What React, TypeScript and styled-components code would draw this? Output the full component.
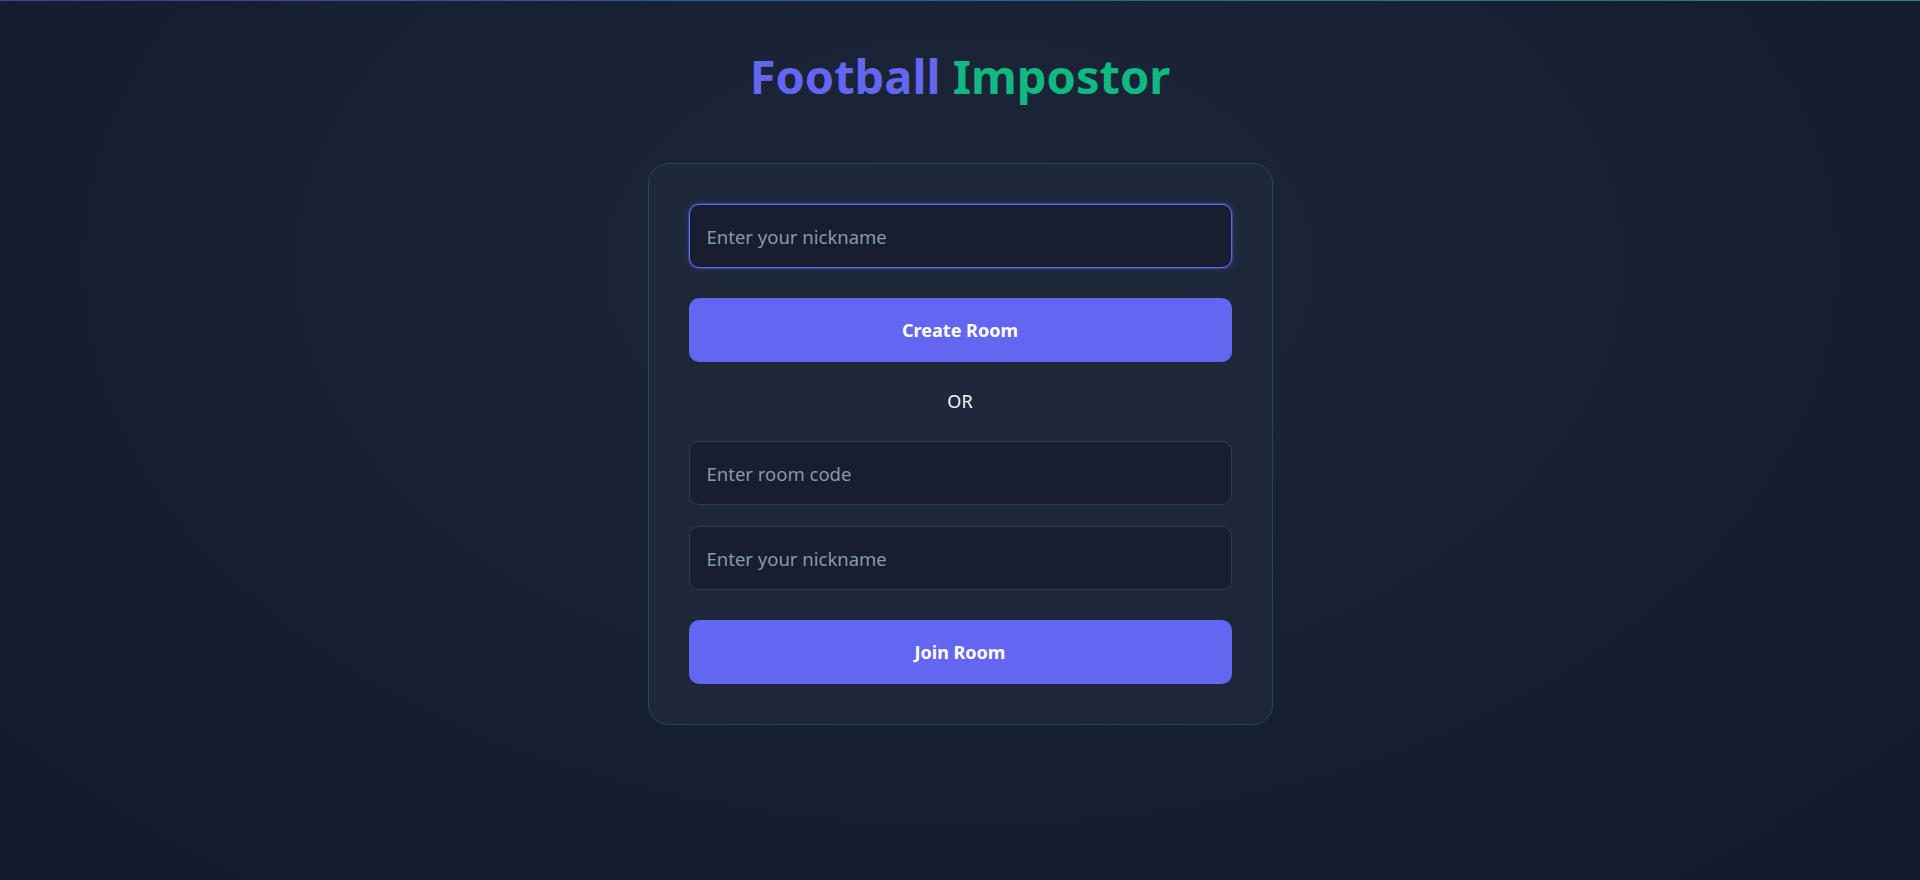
import React from "react";
import styled, { createGlobalStyle } from "styled-components";

const GlobalStyle = createGlobalStyle`
  * { box-sizing: border-box; }
  html, body { margin: 0; padding: 0; }
  body {
    font-family: "Noto Sans", "Open Sans", sans-serif;
    background: #121a2b;
    color: #f1f5f9;
  }
`;

const Page = styled.div`
  min-height: 880px;
  display: flex;
  flex-direction: column;
  align-items: center;
  background: radial-gradient(ellipse at 50% 30%, #1e2739 0%, #182134 45%, #111a2b 100%);
`;

const TopBar = styled.div`
  align-self: stretch;
  height: 1px;
  background: linear-gradient(90deg, #3f43a8, #2f5f9a 50%, #1d8a70);
`;

const Title = styled.h1`
  margin: 43px 0 55px;
  font-size: 47px;
  line-height: 64px;
  font-weight: 700;
`;

const Word = styled.span<{ $color: string }>`
  color: ${(p) => p.$color};
`;

const Card = styled.div`
  width: 625px;
  padding: 40px;
  border: 1px solid #324055;
  border-radius: 20px;
  background: linear-gradient(160deg, #1f2839 0%, #1e283a 60%, #1d2638 100%);
  display: flex;
  flex-direction: column;
`;

const Input = styled.input<{ $active?: boolean; $gap: number }>`
  height: 64px;
  width: 100%;
  padding: 0 17px;
  border-radius: 10px;
  border: 1px solid ${(p) => (p.$active ? "#6366f1" : "#303c51")};
  background: #161e2f;
  color: #e2e8f0;
  font-family: inherit;
  font-size: 18.5px;
  outline: none;
  margin-top: ${(p) => p.$gap}px;
  box-shadow: ${(p) => (p.$active ? "0 0 0 1px rgba(99,102,241,0.35), 0 0 8px rgba(99,102,241,0.25)" : "none")};
  caret-color: #ffffff;
  &::placeholder { color: #8a97ab; }
`;

const Button = styled.button<{ $gap: number }>`
  height: 64px;
  width: 100%;
  margin-top: ${(p) => p.$gap}px;
  border: none;
  border-radius: 10px;
  background: #6366f1;
  color: #ffffff;
  font-family: inherit;
  font-size: 18px;
  font-weight: 700;
  cursor: pointer;
`;

const Divider = styled.div`
  margin: 19px 0 0;
  height: 40px;
  display: flex;
  align-items: center;
  justify-content: center;
  font-size: 18px;
  color: #f1f5f9;
`;

export default function App() {
  return (
    <>
      <GlobalStyle />
      <Page>
        <TopBar />
        <Title>
          <Word $color="#6366f1">Football</Word> <Word $color="#10b981">Impostor</Word>
        </Title>
        <Card>
          <Input $active $gap={0} placeholder="Enter your nickname" autoFocus />
          <Button $gap={30}>Create Room</Button>
          <Divider>OR</Divider>
          <Input $gap={20} placeholder="Enter room code" />
          <Input $gap={21} placeholder="Enter your nickname" />
          <Button $gap={30}>Join Room</Button>
        </Card>
      </Page>
    </>
  );
}
